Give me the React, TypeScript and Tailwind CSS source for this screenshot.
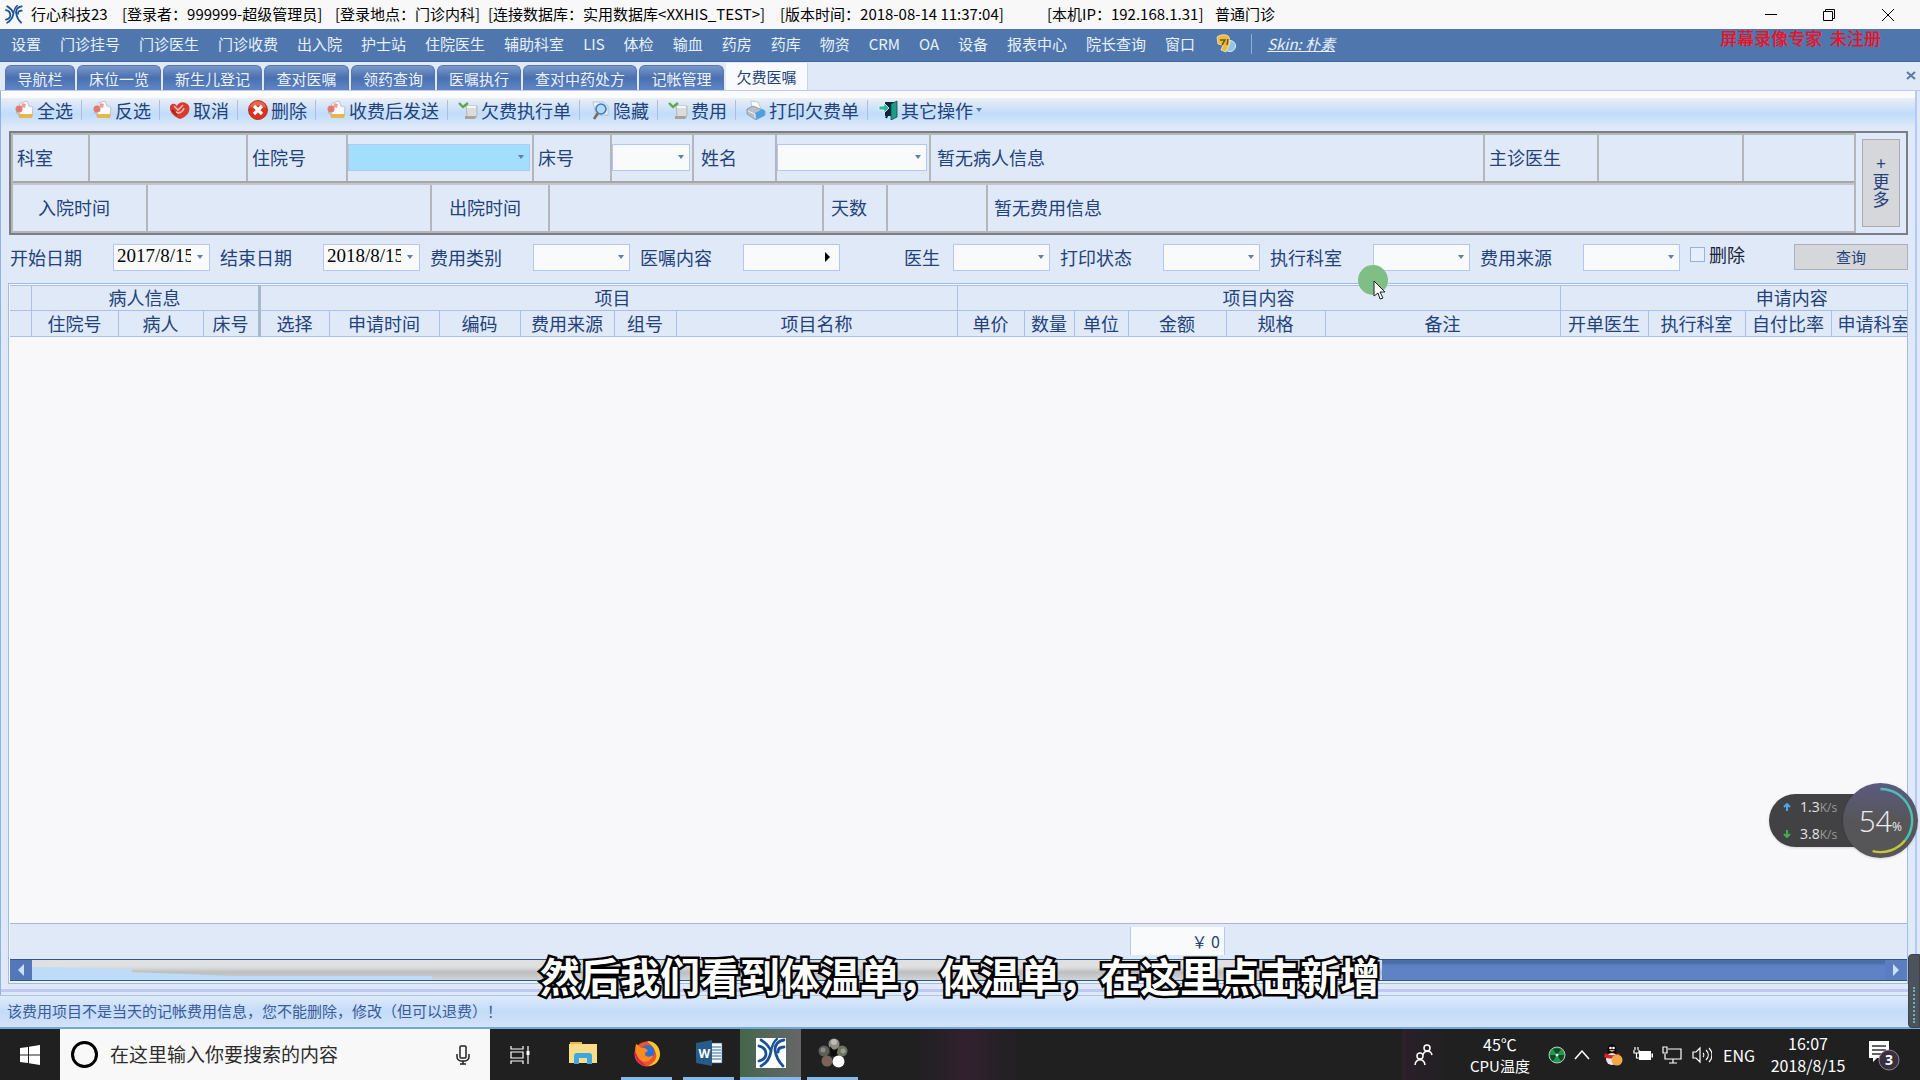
import React from "react";

const TITLE = [
  ["行心科技23", "w-[91px]"],
  ["[登录者：999999-超级管理员]", "w-[213px]"],
  ["[登录地点：门诊内科]", "w-[153px]"],
  ["[连接数据库：实用数据库<XXHIS_TEST>]", "w-[292px]"],
  ["[版本时间：2018-08-14 11:37:04]", "w-[267px]"],
  ["[本机IP：192.168.1.31]", "w-[168px]"],
  ["普通门诊", "w-[70px]"],
];

const MENU = [
  "设置", "门诊挂号", "门诊医生", "门诊收费", "出入院", "护士站", "住院医生", "辅助科室", "LIS", "体检",
  "输血", "药房", "药库", "物资", "CRM", "OA", "设备", "报表中心", "院长查询", "窗口",
];

const TABS = [
  ["导航栏", "w-[70px]"],
  ["床位一览", "w-[84px]"],
  ["新生儿登记", "w-[99px]"],
  ["查对医嘱", "w-[85px]"],
  ["领药查询", "w-[84px]"],
  ["医嘱执行", "w-[84px]"],
  ["查对中药处方", "w-[114px]"],
  ["记帐管理", "w-[85px]"],
];

function Logo({ className }: { className: string }) {
  return (
    <svg viewBox="0 0 30 30" className={className} fill="none" stroke="#1a5296" strokeWidth="2.800" strokeLinecap="round" aria-hidden="true">
      <path d="M3 8c4 1 7 4 7 8s-3 6-7 7" />
      <path d="M5 2c5 3 8 6 10 11-1 7-4 12-10 15" />
      <path d="M21 1c-4 3-5 7-6 12" strokeWidth="2.200" />
      <path d="M28 2c-6 1-9 5-9 10 1 7 3 11 8 16" />
      <path d="M28 9c-4 0-6 2-6 5" />
    </svg>
  );
}

function NoteIcon() {
  return (
    <svg viewBox="0 0 20 20" className="size-5" aria-hidden="true">
      <path d="M6 3l7-2 2 5 4 1-1 9H5z" fill="#fbfbfd" stroke="#b0b7ca" strokeWidth=".8" />
      <circle cx="5" cy="9" r="3.500" fill="#e27a72" />
      <path d="M8 3l4 1-1 4-4-1z" fill="#eda096" />
      <path d="M4 14h15l-1 4H5z" fill="#e4b850" />
      <path d="M2 12l4 3" stroke="#bcb6c0" strokeWidth="1.500" />
    </svg>
  );
}

function CancelIcon() {
  return (
    <svg viewBox="0 0 20 20" className="size-5" aria-hidden="true">
      <path d="M0 6c3-4 6-2 7 0 2-5 9-5 12 0 2 6-3 11-9 13C4 17-1 12 0 6z" fill="#d93a2f" />
      <path d="M4 6l4 4 5-5M6 12c3 2 7 0 8-4" stroke="#f7b9ae" strokeWidth="1.600" fill="none" />
      <path d="M2 10l5 5" stroke="#8e1c18" strokeWidth="1.200" />
    </svg>
  );
}

function DeleteIcon() {
  return (
    <svg viewBox="0 0 20 20" className="size-5" aria-hidden="true">
      <circle cx="10" cy="10" r="9.500" fill="#d8341f" stroke="#a92414" strokeWidth=".8" />
      <path d="M2 8a8 7 0 0 1 16 0c-5-3-11-3-16 0z" fill="#ee8a6f" opacity=".6" />
      <path d="M6 6l8 8M14 6l-8 8" stroke="#fff" strokeWidth="3.200" />
    </svg>
  );
}

function FeeIcon() {
  return (
    <svg viewBox="0 0 20 20" className="size-5" aria-hidden="true">
      <path d="M8 6h11v8l-1 4H7l2-3z" fill="#dcdcd8" stroke="#a8a8a2" strokeWidth=".7" />
      <path d="M9 6h9v2H9z" fill="#f6f6f4" />
      <path d="M7 16h11l-1 3H7z" fill="#a8a49a" />
      <path d="M1 3l4 4 5-4" stroke="#58a850" strokeWidth="2.400" fill="none" />
    </svg>
  );
}

function HideIcon() {
  return (
    <svg viewBox="0 0 20 20" className="size-5" aria-hidden="true">
      <path d="M3 2h10l5 4v9H6z" fill="#eef4fb" stroke="#a6b8d4" strokeWidth=".8" />
      <circle cx="11" cy="9" r="5" fill="#b4dcf6" stroke="#3f78b8" strokeWidth="1.600" />
      <path d="M8 13l-4 6" stroke="#7d6a58" strokeWidth="2.600" />
    </svg>
  );
}

function PrintIcon() {
  return (
    <svg viewBox="0 0 20 20" className="size-5" aria-hidden="true">
      <path d="M5 1l7 1 3 7-9 1z" fill="#fdfdfd" stroke="#a8b4c8" strokeWidth=".7" />
      <path d="M1 9l6-3 12 5v4l-9 5-9-6z" fill="#b6bfca" stroke="#76869a" strokeWidth=".7" />
      <path d="M9 13l8-4 2 3-1 4-8 3z" fill="#4aa0e0" />
      <path d="M2 11l7 3v4" stroke="#eef2f6" fill="none" />
    </svg>
  );
}

function DoorIcon() {
  return (
    <svg viewBox="0 0 20 20" className="size-5" aria-hidden="true">
      <path d="M7 2h11v14H7z" fill="#10243c" />
      <path d="M13 4l6-3v16l-6 3z" fill="#1f9c86" stroke="#0b4c44" strokeWidth=".8" />
      <path d="M1 6h5V3l5 5-5 5v-3H1z" fill="#2bb89c" stroke="#f4fbfa" strokeWidth=".8" />
      <path d="M8 18l2-4" stroke="#10243c" strokeWidth="2" />
    </svg>
  );
}

const TOOLS: [string, () => React.ReactElement][] = [
  ["全选", NoteIcon],
  ["反选", NoteIcon],
  ["取消", CancelIcon],
  ["删除", DeleteIcon],
  ["收费后发送", NoteIcon],
  ["欠费执行单", FeeIcon],
  ["隐藏", HideIcon],
  ["费用", FeeIcon],
  ["打印欠费单", PrintIcon],
  ["其它操作", DoorIcon],
];

function Arrow({ className }: { className?: string }) {
  return (
    <svg viewBox="0 0 6 4" className={"h-1 w-1.5 " + (className ?? "")} fill="#5f7ea8" aria-hidden="true">
      <path d="M0 0h6L3 4z" />
    </svg>
  );
}

function Combo({ id, className }: { id: string; className: string }) {
  return (
    <div className={"relative shrink-0 " + className}>
      <select id={id} className="block h-full w-full appearance-none border border-[#b4c6f6] bg-inherit">
        <option></option>
      </select>
      <Arrow className="pointer-events-none absolute top-1/2 right-1.5 -translate-y-1/2" />
    </div>
  );
}

function Cell({ className, children }: { className: string; children?: React.ReactNode }) {
  return <div className={"flex shrink-0 items-center border-r-2 border-[#b4b6ba] pb-0.5 " + className}>{children}</div>;
}

function DateField({ id, value }: { id: string; value: string }) {
  return (
    <div className="flex h-[27px] w-[97px] items-center border border-[#b4c6f6] bg-[#f9fafc]">
      <input id={id} defaultValue={value} className="w-[77px] bg-transparent pb-0.5 pl-[3px] font-['Liberation_Serif',serif] text-[19px] leading-6 text-black outline-none" />
      <Arrow className="ml-1.5" />
    </div>
  );
}

const COLS = [
  ["住院号", "w-[87px]"],
  ["病人", "w-[85px]"],
  ["床号", "w-[56px]"],
  ["选择", "w-[70px]"],
  ["申请时间", "w-[110px]"],
  ["编码", "w-[81px]"],
  ["费用来源", "w-[94px]"],
  ["组号", "w-[62px]"],
  ["项目名称", "w-[281px]"],
  ["单价", "w-[67px]"],
  ["数量", "w-[50px]"],
  ["单位", "w-[54px]"],
  ["金额", "w-[98px]"],
  ["规格", "w-[99px]"],
  ["备注", ""],
  ["开单医生", "w-[88px]"],
  ["执行科室", "w-[97px]"],
  ["自付比率", "w-[86px]"],
  ["申请科室", "w-[76px]"],
];

function FilterItem({ id, label, right, children }: { id: string; label: string; right?: boolean; children: React.ReactNode }) {
  return (
    <div className="flex w-[210px] shrink-0 items-center">
      <label htmlFor={id} className={"w-[103px] shrink-0 whitespace-nowrap " + (right ? "pl-[54px]" : "")}>
        {label}
      </label>
      {children}
    </div>
  );
}

function TaskButton({ label, className, children }: { label: string; className: string; children: React.ReactNode }) {
  return (
    <button aria-label={label} className={"flex h-full items-center justify-center border-b-[3px] " + className}>
      {children}
    </button>
  );
}

export default function App() {
  return (
    <div className="relative flex min-h-screen flex-col overflow-hidden bg-[#dfe9f7] font-['Noto_Sans_CJK_SC',sans-serif] text-[18px] text-[#23427c]">
      {/* Title bar */}
      <header className="flex h-[29px] shrink-0 items-center bg-[#f8f8f9] pr-0.5 text-[15px] text-black">
        <Logo className="mr-2 ml-1 size-[19px]" />
        <h1 className="flex flex-1 whitespace-nowrap">
          {TITLE.map(([t, w]) => (
            <span key={t} className={"shrink-0 whitespace-pre " + w}>{t}</span>
          ))}
        </h1>
        <button aria-label="最小化" className="flex w-[58px] justify-center">
          <svg viewBox="0 0 12 12" className="size-3" stroke="#000" fill="none"><path d="M0 5.500h12" /></svg>
        </button>
        <button aria-label="还原" className="flex w-[58px] justify-center">
          <svg viewBox="0 0 12 12" className="size-3" stroke="#000" fill="none"><path d="M.5 2.500h9v9h-9zM2.500 2.500v-2h9v9h-2" /></svg>
        </button>
        <button aria-label="关闭" className="flex w-[60px] justify-center">
          <svg viewBox="0 0 12 12" className="size-3" stroke="#000" fill="none"><path d="M0 0l12 12M12 0L0 12" /></svg>
        </button>
      </header>

      {/* Menu */}
      <nav className="flex h-[33px] shrink-0 items-center gap-[19px] border-b border-[#3f679f] bg-[#4f77ae] pb-0.5 pl-[11px] text-[15px] whitespace-nowrap text-[#e8f1fb]">
        {MENU.map((m) => (
          <button key={m}>{m}</button>
        ))}
        <button aria-label="换肤" className="ml-0.5">
          <svg viewBox="0 0 20 20" className="size-5">
            <circle cx="14" cy="12" r="5.500" fill="#8fc3ea" stroke="#dceefa" />
            <path d="M1 3c4-3 10-3 12 0l1 6-4 9-5-2 2-5-5-1z" fill="#e8bd45" stroke="#fbeab0" strokeWidth=".8" />
            <path d="M4 6h5l-3 5M12 5l-1 6" stroke="#7a5212" strokeWidth="1.500" fill="none" />
          </svg>
        </button>
        <span className="-mx-1 h-5 w-px bg-[#8fafd8]" />
        <a href="#skin" className="italic underline">Skin: 朴素</a>
        <span className="mr-[39px] ml-auto self-start text-[17px] leading-[18px] font-medium whitespace-pre text-[#f01020]">屏幕录像专家  未注册</span>
      </nav>

      {/* Tabs */}
      <div role="tablist" className="flex h-[29px] shrink-0 items-end gap-0.5 border-b border-[#c4c6f6] pl-[5px] text-[15px]">
        {TABS.map(([t, w]) => (
          <button
            key={t}
            role="tab"
            aria-selected="false"
            className={"h-[25px] shrink-0 rounded-t-md border border-b-0 border-[#5578b4] bg-linear-to-b from-[#7a98c8] via-[#4a70b0] to-[#5f86c6] pt-0.5 text-[#edf3fc] " + w}
          >
            {t}
          </button>
        ))}
        <button role="tab" aria-selected="true" className="h-[27px] w-[82px] shrink-0 border-r border-[#c4d4f4] bg-[#f8fafd] pt-0.5">欠费医嘱</button>
        <button aria-label="关闭标签" className="mr-1 ml-auto self-center">
          <svg viewBox="0 0 10 10" className="size-2.5" stroke="#5b7aa8" strokeWidth="2"><path d="M1 1l8 7M9 1L1 8" /></svg>
        </button>
      </div>

      <main className="mr-[3px] flex flex-1 flex-col border-r-2 border-l border-r-[#b6c8f8] border-l-[#8fb0e8]">
        {/* Toolbar */}
        <div className="h-[7px] shrink-0 bg-[#fafbfd]" />
        <div className="flex h-[29px] shrink-0 items-center bg-linear-to-b from-[#eceef4] from-0% via-[#bfdcfb] via-55% to-[#dfe9f7] pb-[5px] pl-[3px]">
          {TOOLS.map(([t, Icon], i) => (
            <React.Fragment key={t}>
              {i > 0 && <span className="h-5 w-px bg-[#aebfda]" />}
              <button className="flex items-center gap-[3px] pr-2 pl-[10px] leading-6 whitespace-nowrap">
                <Icon />
                {t}
                {i === TOOLS.length - 1 && <Arrow />}
              </button>
            </React.Fragment>
          ))}
        </div>

        {/* Patient information */}
        <section className="mt-1 mr-[7px] ml-2 flex h-[104px] shrink-0 border-2 border-[#7b7e83] whitespace-nowrap">
          <div className="flex min-w-0 flex-1 flex-col border-2 border-[#b4b6ba]">
            <div className="flex flex-1 border-b-2 border-[#a4a6aa]">
              <Cell className="w-[77px] pl-[4px]">科室</Cell>
              <Cell className="w-[158px]" />
              <Cell className="w-[100px] pl-[4px]"><label htmlFor="inpatient">住院号</label></Cell>
              <Cell className="w-[186px]"><Combo id="inpatient" className="h-[27px] w-[182px] bg-[#a2dffd]" /></Cell>
              <Cell className="w-[78px] pl-[4px]"><label htmlFor="bed">床号</label></Cell>
              <Cell className="w-[82px]"><Combo id="bed" className="h-[27px] w-[78px] bg-[#f9fafc]" /></Cell>
              <Cell className="w-[83px] pl-[7px]"><label htmlFor="patient">姓名</label></Cell>
              <Cell className="w-[154px]"><Combo id="patient" className="h-[27px] w-[150px] bg-[#f9fafc]" /></Cell>
              <Cell className="min-w-0 flex-1 pl-[6px]">暂无病人信息</Cell>
              <Cell className="w-[114px] pl-[4px]">主诊医生</Cell>
              <Cell className="w-[145px]" />
              <div className="w-[110px] shrink-0" />
            </div>
            <div className="flex flex-1 border-t-2 border-[#c4c6ca]">
              <Cell className="w-[135px] pl-[25px]">入院时间</Cell>
              <Cell className="w-[284px]" />
              <Cell className="w-[118px] pl-[17px]">出院时间</Cell>
              <Cell className="w-[274px]" />
              <Cell className="w-[64px] pl-[7px]">天数</Cell>
              <Cell className="w-[100px]" />
              <div className="flex flex-1 items-center pb-0.5 pl-[6px]">暂无费用信息</div>
            </div>
          </div>
          <div className="flex w-[50px] shrink-0 items-center justify-center">
            <button className="flex h-[88px] w-[38px] flex-col items-center justify-center border border-[#aaacb2] bg-[#d6d7da] pb-1 text-[17px] leading-[18px]">
              <span>+</span>
              <span>更</span>
              <span>多</span>
            </button>
          </div>
        </section>

        {/* Filters */}
        <form className="mr-[7px] flex h-12 shrink-0 items-center pb-1 pl-[9px]">
          <FilterItem id="start" label="开始日期"><DateField id="start" value="2017/8/15" /></FilterItem>
          <FilterItem id="end" label="结束日期"><DateField id="end" value="2018/8/15" /></FilterItem>
          <FilterItem id="feeType" label="费用类别"><Combo id="feeType" className="h-[27px] w-[97px] bg-[#f9fafc]" /></FilterItem>
          <FilterItem id="order" label="医嘱内容">
            <div className="flex h-[27px] w-[97px] items-center border border-[#b4c6f6] bg-[#f9fafc]">
              <input id="order" className="w-[81px] bg-transparent outline-none" />
              <svg viewBox="0 0 6 10" className="h-2.5 w-1.5" fill="#000" aria-hidden="true"><path d="M0 0l5 5-5 5z" /></svg>
            </div>
          </FilterItem>
          <FilterItem id="doctor" label="医生" right><Combo id="doctor" className="h-[27px] w-[97px] bg-[#f9fafc]" /></FilterItem>
          <FilterItem id="print" label="打印状态"><Combo id="print" className="h-[27px] w-[97px] bg-[#f9fafc]" /></FilterItem>
          <FilterItem id="dept" label="执行科室"><Combo id="dept" className="h-[27px] w-[97px] bg-[#f9fafc]" /></FilterItem>
          <FilterItem id="source" label="费用来源"><Combo id="source" className="h-[27px] w-[97px] bg-[#f9fafc]" /></FilterItem>
          <label className="flex items-center gap-1 pb-1.5 whitespace-nowrap text-[#16233c]">
            <input type="checkbox" className="size-[15px] appearance-none border border-[#94b0ea] bg-[#e6effb]" />
            删除
          </label>
          <button type="button" className="ml-auto h-[26px] w-[114px] border border-[#aab0bc] bg-[#d6d7da] text-[15px]">查询</button>
        </form>

        {/* Grid */}
        <section className="mr-[7px] ml-[7px] flex flex-1 flex-col border border-[#9ebcea] bg-[#f8f8fa] pt-px pl-px">
          <table className="w-full table-fixed border-collapse overflow-hidden border-t border-[#a8bff0] bg-[#dfe9f7] leading-[22px] whitespace-nowrap">
            <colgroup>
              <col className="w-[21px]" />
              {COLS.map(([, w], i) => (
                <col key={i} className={w} />
              ))}
            </colgroup>
            <thead>
              <tr className="h-[25px]">
                <th className="border-r border-b border-[#a8bff0]" />
                <th colSpan={3} className="border-r-[3px] border-b border-r-[#a3bcc9] border-b-[#a8bff0] p-0 pb-0.5 font-normal">病人信息</th>
                <th colSpan={6} className="border-r border-b border-[#a8bff0] p-0 pb-0.5 pl-2 font-normal">项目</th>
                <th colSpan={6} className="border-r border-b border-[#a8bff0] p-0 pb-0.5 font-normal">项目内容</th>
                <th colSpan={4} className="border-b border-[#a8bff0] p-0 pb-0.5 pl-[116px] font-normal">申请内容</th>
              </tr>
              <tr className="h-[26px]">
                <th className="border-r border-b border-[#a8bff0]" />
                {COLS.map(([c], i) => (
                  <th
                    key={i}
                    className={
                      "overflow-hidden border-b p-0 pb-0.5 font-normal " +
                      (i === 2 ? "border-r-[3px] border-r-[#a3bcc9] border-b-[#a8bff0]" : i === 18 ? "border-[#a8bff0] pl-1.5 text-left" : "border-r border-[#a8bff0]")
                    }
                  >
                    {c}
                  </th>
                ))}
              </tr>
            </thead>
          </table>
          <div className="flex-1" />
          <div className="flex h-9 shrink-0 items-start border-t border-[#a9b6cc] bg-[#dfe9f7] pt-[3px]">
            <output className="ml-[1120px] h-[28px] w-[95px] border-x border-[#b8c8ea] bg-[#f8fafc] pr-1 text-right text-[16px] leading-7 whitespace-pre">￥ 0</output>
          </div>
          <div className="flex h-[22px] shrink-0 border-y border-[#35567f]">
            <button aria-label="向左滚动" className="flex w-[22px] items-center justify-center bg-[#5377b9]">
              <svg viewBox="0 0 6 12" className="h-3 w-1.5" fill="#c9e2fa"><path d="M6 0v12L0 6z" /></svg>
            </button>
            <div className="relative h-full w-[1350px] bg-linear-to-b from-[#dfe0e2] from-35% via-[#bcbec0] via-60% to-[#cfd4d8]">
              <svg viewBox="0 0 400 20" preserveAspectRatio="none" className="absolute inset-y-0 left-0 h-full w-[400px]" aria-hidden="true">
                <path d="M0 7L100 9V12L200 16H400V20H0z" fill="#bedcf8" />
              </svg>
            </div>
            <div className="flex-1 bg-linear-to-b from-[#4c6fa8] from-15% to-[#5f82c6] to-30%" />
            <button aria-label="向右滚动" className="flex w-[22px] items-center justify-center bg-[#5b7ec1]">
              <svg viewBox="0 0 6 12" className="h-3 w-1.5" fill="#c9e2fa"><path d="M0 0v12l6-6z" /></svg>
            </button>
          </div>
          <div className="h-0.5 bg-[#eaf3fd]" />
        </section>
        <div className="mt-[5px] mb-[3px] h-[3px] shrink-0 bg-[#c0c8f6]" />
      </main>

      {/* Status bar */}
      <div className="flex h-[34px] shrink-0 items-center border-t border-b-2 border-t-[#a8c4ee] border-b-[#6fa8dc] bg-linear-to-b from-[#dfeafa] via-[#c2dcfa] to-[#d4e2f8] pl-[7px] text-[15px] text-[#3a5a98]">
        该费用项目不是当天的记帐费用信息，您不能删除，修改（但可以退费）！
      </div>

      {/* Taskbar */}
      <footer className="flex h-[51px] shrink-0 items-stretch bg-[#202021] text-white">
        <button aria-label="开始" className="flex w-[60px] items-center justify-center">
          <svg viewBox="0 0 20 20" className="size-5" fill="#fff"><path d="M0 3l8-1v7.500H0zM9 1.800L20 0v9.500H9zM0 10.500h8V18l-8-1zM9 10.500h11V20L9 18.200z" /></svg>
        </button>
        <label className="flex w-[430px] items-center bg-[#f8f8f9] pl-[11px]">
          <span className="size-[27px] rounded-full border-[3px] border-black" />
          <input aria-label="搜索" placeholder="在这里输入你要搜索的内容" className="ml-3 w-[340px] bg-transparent text-[19px] text-black outline-none placeholder:text-[#2c2c2c]" />
          <svg viewBox="0 0 14 20" className="ml-1.5 h-5 w-3.5" fill="none" stroke="#222" strokeWidth="1.500" aria-hidden="true">
            <rect x="4" y="1" width="6" height="12" rx="1" />
            <path d="M1 9v3c0 2 2 4 4 4h4c2 0 4-2 4-4V9M7 16v3M4 19h6" />
          </svg>
        </label>
        <button aria-label="任务视图" className="flex w-[60px] items-center justify-center">
          <svg viewBox="0 0 20 20" className="size-5" fill="none" stroke="#fff" strokeWidth="1.200"><path d="M1 1v3h12V1M1 19v-3h12v3M1 7h12v6H1zM18 1v18" /><path d="M16.500 6h3v4h-3z" fill="#fff" stroke="none" /></svg>
        </button>
        <TaskButton label="文件资源管理器" className="w-[66px] border-transparent">
          <svg viewBox="0 0 28 24" className="h-6 w-7"><path d="M1 1h12v3H1z" fill="#e4b64c" /><path d="M0 3h28v19H0z" fill="#f8dc88" /><path d="M5 23v-8c0-2 1-3 3-3h12c2 0 3 1 3 3v8h-5v-6h-8v6z" fill="#3ea6e0" /></svg>
        </TaskButton>
        <TaskButton label="Firefox" className="ml-[5px] w-[51px] border-[#83b9ec]">
          <svg viewBox="0 0 28 28" className="size-7">
            <circle cx="14" cy="15" r="12.500" fill="#f0522c" />
            <path d="M14 2c8 0 13 6 13 13s-5 12-12 12c8-4 10-9 7-15-1-4-4-6-8-10z" fill="#fbc62d" />
            <circle cx="14.500" cy="13" r="7" fill="#2f6fd0" />
            <path d="M3 5c2 1 4 2 5 4 3-1 5 0 7 3-3 1-4 3-2 5 2 1 5 1 7-1-1 5-6 8-11 6-6-2-8-10-6-17z" fill="#ff8a1e" />
            <path d="M2 12c-1 7 4 14 12 15-5-3-9-7-12-15z" fill="#d81e5b" />
          </svg>
        </TaskButton>
        <TaskButton label="Word" className="ml-[11px] w-[51px] border-[#83b9ec]">
          <svg viewBox="0 0 28 26" className="h-[26px] w-7">
            <path d="M15 3h12v20H15z" fill="#f5f8fb" stroke="#2b5c8a" strokeWidth=".6" />
            <path d="M17 7h9M17 10h9M17 13h9M17 16h9M17 19h9" stroke="#2b6a9a" strokeWidth="1.200" />
            <path d="M1 3l16-3v26L1 23z" fill="#275c88" />
            <text x="3.500" y="18" fontFamily="Open Sans" fontWeight="700" fontSize="12" fill="#fff">W</text>
          </svg>
        </TaskButton>
        <TaskButton label="行心科技" className="ml-[6px] w-[61px] border-[#83b9ec] bg-linear-to-r from-[#44664a] to-[#666668]">
          <span className="bg-white"><Logo className="size-[30px]" /></span>
        </TaskButton>
        <TaskButton label="屏幕录像专家" className="ml-[6px] w-[51px] border-[#83b9ec]">
          <svg viewBox="0 0 30 30" className="size-[30px]">
            <circle cx="16" cy="6" r="5.500" fill="#8e8e86" />
            <circle cx="16" cy="4" r="3" fill="#bcbcb4" />
            <circle cx="6" cy="13" r="5.500" fill="#5c5e58" />
            <circle cx="5" cy="12" r="2.500" fill="#8a8c84" />
            <circle cx="24" cy="13" r="5.500" fill="#6c7262" />
            <circle cx="25" cy="13" r="2.500" fill="#9aa08c" />
            <circle cx="9" cy="23" r="5.500" fill="#7a6458" />
            <circle cx="20.500" cy="23.500" r="6" fill="#fff" />
            <path d="M12 8l4 5 4-3-2 8h-5z" fill="#0c0c0c" />
          </svg>
        </TaskButton>
        <div className="ml-[60px] w-[100px] bg-linear-to-r from-transparent via-[#33202f] to-transparent" />

        <div className="ml-auto flex items-center text-[16px] leading-[22px]">
          <button aria-label="人脉" className="flex h-full w-[44px] items-center justify-center bg-linear-to-r from-[#2c1f2a] to-[#202021]">
            <svg viewBox="0 0 20 22" className="h-[22px] w-5" fill="none" stroke="#fff" strokeWidth="1.500"><circle cx="13" cy="4" r="3" /><path d="M9 11c1-5 8-5 9 0" /><circle cx="6" cy="12" r="3" /><path d="M1 21c1-7 9-7 10 0" /></svg>
          </button>
          <div className="mr-[17px] ml-[23px] w-[62px] text-center"><div>45℃</div><div className="text-[15px]">CPU温度</div></div>
          <svg viewBox="0 0 18 18" className="size-[18px]" aria-hidden="true"><circle cx="9" cy="9" r="8" fill="#1c9a4c" stroke="#b9c6be" /><path d="M9 9L5 3c2-1 6-1 8 0zM9 9H2c0 2 1 5 3 6zM9 9h7c0 2-1 5-3 6z" fill="#0c2c18" opacity=".75" /><circle cx="9" cy="9" r="1.500" fill="#d8f0e0" /></svg>
          <svg viewBox="0 0 16 10" className="ml-[8px] h-2.5 w-4" fill="none" stroke="#fff" strokeWidth="1.500" aria-hidden="true"><path d="M1 9l7-8 7 8" /></svg>
          <svg viewBox="0 0 20 22" className="ml-[13px] h-[22px] w-5" aria-hidden="true"><ellipse cx="9" cy="6" rx="4.500" ry="6" fill="#0a0a0a" /><circle cx="7.500" cy="4" r="1.300" fill="#fff" /><circle cx="10.500" cy="4" r="1.300" fill="#fff" /><ellipse cx="9" cy="15" rx="6" ry="6" fill="#e8e8e8" /><path d="M2 9c4 3 10 3 14 0l1 4c-5 2-11 2-16 0z" fill="#d8231f" /><circle cx="14" cy="16" r="5.500" fill="#f0a848" /><path d="M6 6h6l-3 2z" fill="#f4b020" /></svg>
          <svg viewBox="0 0 20 16" className="ml-[10px] h-4 w-5" aria-hidden="true"><path d="M6 4h12v9H6zM18.500 6.500h1.500v4h-1.500z" fill="#fff" /><path d="M1 3v3h5V3M2 3V0M5 3V0M3.500 6v5H6" stroke="#fff" strokeWidth="1.200" fill="none" /></svg>
          <svg viewBox="0 0 20 18" className="ml-[9px] h-[18px] w-5" fill="none" stroke="#fff" strokeWidth="1.200" aria-hidden="true"><path d="M6 3h13v10H3V8M1 1h4v6H1zM11 13v4M7 17h8" /></svg>
          <svg viewBox="0 0 20 18" className="ml-[10px] h-[18px] w-5" fill="none" stroke="#fff" strokeWidth="1.200" aria-hidden="true"><path d="M1 6h3l4-4v14l-4-4H1zM11 7c1 1 1 3 0 4M14 4c3 3 3 7 0 10M17 2c4 4 4 10 0 14" /></svg>
          <span className="ml-[11px]">ENG</span>
          <div className="ml-[14px] w-[78px] pb-0.5 text-center"><div>16:07</div><div>2018/8/15</div></div>
          <button aria-label="通知" className="mr-[20px] ml-[21px]">
            <svg viewBox="0 0 32 32" className="size-8"><path d="M1 2h20v17H9l-4 4v-4H1z" fill="#fff" /><path d="M4 7h14M4 11h14M4 15h10" stroke="#333" strokeWidth="1.500" /><circle cx="21" cy="21" r="10" fill="#3a2f3c" stroke="#8c8490" /><text x="21" y="26" textAnchor="middle" fontFamily="Open Sans" fontWeight="700" fontSize="14" fill="#fff">3</text></svg>
          </button>
        </div>
      </footer>

      {/* Caption */}
      <p className="pointer-events-none absolute inset-x-0 bottom-[75px] text-center text-[40px] leading-[60px] font-bold text-white [-webkit-text-stroke:5px_#000] [paint-order:stroke_fill]">
        然后我们看到体温单，体温单，在这里点击新增
      </p>

      {/* Network gadget */}
      <div className="absolute right-0.5 bottom-[222px] flex items-center">
        <div className="-mr-8 flex h-[53px] w-[106px] flex-col justify-center rounded-l-full bg-[#424244] pl-[14px] font-['Open_Sans',sans-serif] text-[14px] leading-[26px] text-[#e4e4e4] shadow">
          <div className="flex items-center gap-[9px]">
            <svg viewBox="0 0 8 8" className="size-2" fill="none" stroke="#4aa8e8" strokeWidth="2" aria-hidden="true"><path d="M4 8V1M1 4l3-3 3 3" /></svg>
            <span>1.3<span className="text-[12px] text-[#9a9a9c]">K/s</span></span>
          </div>
          <div className="flex items-center gap-[9px]">
            <svg viewBox="0 0 8 8" className="size-2" fill="none" stroke="#3fae50" strokeWidth="2" aria-hidden="true"><path d="M4 0v7M1 4l3 3 3-3" /></svg>
            <span>3.8<span className="text-[12px] text-[#9a9a9c]">K/s</span></span>
          </div>
        </div>
        <div className="relative flex size-[75px] items-center justify-center rounded-full bg-linear-to-b from-[#5b5a82] to-[#565658] to-50% font-['Open_Sans',sans-serif] text-[#ececf0] shadow">
          <svg viewBox="0 0 76 76" className="absolute inset-0" fill="none" strokeWidth="2.500" aria-hidden="true">
            <path d="M38 6a32 32 0 0 1 25 52" stroke="#4cc0b0" />
            <path d="M63 58a32 32 0 0 1-33 11" stroke="#c0c83c" />
          </svg>
          <span className="text-[29px] font-light">54</span>
          <span className="mt-3 text-[12px]">%</span>
        </div>
      </div>

      {/* Side dock */}
      <div className="absolute right-0 bottom-[52px] flex h-[74px] w-3 items-end justify-center rounded-l border border-[#3c444c] bg-[#4c535b] pb-1">
        <div className="h-9 border-l-2 border-dotted border-[#6cb4c0]" />
      </div>

      {/* Pointer */}
      <div className="pointer-events-none absolute top-[265px] left-[1358px] size-[30px] rounded-full bg-[#7fbf86]">
        <svg viewBox="0 0 14 20" className="mt-[15px] ml-[15px] h-5 w-3.5" fill="#fff" stroke="#222" aria-hidden="true"><path d="M1 1v15l4-3 2 6 3-1-3-6h5z" /></svg>
      </div>
    </div>
  );
}
